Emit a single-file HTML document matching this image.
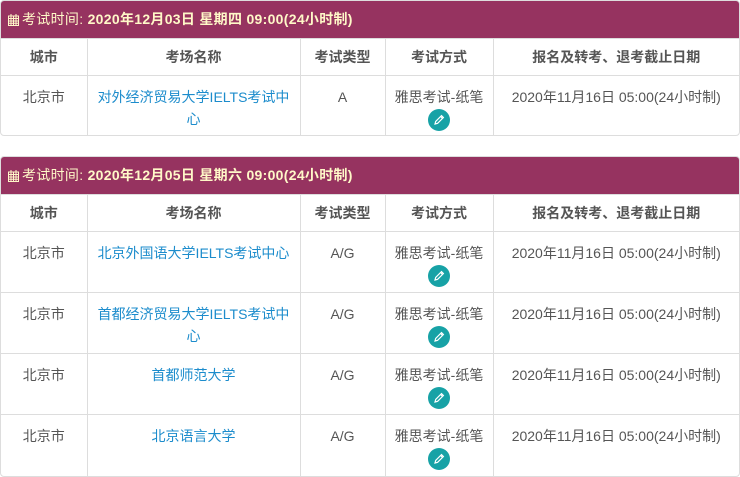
<!DOCTYPE html>
<html><head><meta charset="utf-8"><style>
*{margin:0;padding:0;box-sizing:border-box}
body{width:740px;height:477px;background:#fff;font-family:"Liberation Sans","Noto Sans CJK SC",sans-serif;font-size:14px;color:#555;overflow:hidden}
.blk{position:absolute;left:0;width:740px;border:1px solid #ddd;border-radius:4px;overflow:hidden}
.hd{height:37px;background:#963360;color:#fff8c8;font-size:14px;line-height:37px;padding-left:7px;font-weight:bold;letter-spacing:0.3px;white-space:nowrap}
.hd .l{font-weight:normal}
table{border-collapse:collapse;width:100%;table-layout:fixed}
td,th{border-right:1px solid #ddd;border-top:1px solid #ddd;text-align:center;vertical-align:top}
td:last-child,th:last-child{border-right:none}
th{height:37px;line-height:36px;font-weight:bold;color:#555}
td{height:61px;padding-top:10px;line-height:22px}
td.n{padding-left:10px;padding-right:10px}
a{color:#1c8ccc;text-decoration:none}
.pen{display:inline-block;width:22px;height:22px;border-radius:50%;background:#17a2a6;vertical-align:top;margin-top:1px;position:relative}
.pen svg{position:absolute;left:5px;top:5px}
.cal{display:inline-block;vertical-align:-2px;margin-right:3px}
</style></head><body>
<div class="blk" style="top:0;height:136px">
<div class="hd"><svg class="cal" width="11" height="12" viewBox="0 0 11 12"><rect x="0.5" y="2" width="10" height="9.5" fill="none" stroke="#fff8c8"/><path d="M0 4.5h11M0 7h11M0 9.3h11M3 2v10M5.5 2v10M8 2v10M3 0v3M8 0v3" stroke="#fff8c8" stroke-width="1"/></svg><span class="l">考试时间: </span>2020年12月03日 星期四 09:00(24小时制)</div>
<table><colgroup><col style="width:86px"><col style="width:213px"><col style="width:85px"><col style="width:108px"><col></colgroup>
<tr><th>城市</th><th>考场名称</th><th>考试类型</th><th>考试方式</th><th>报名及转考、退考截止日期</th></tr>
<tr><td>北京市</td><td class="n"><a>对外经济贸易大学IELTS考试中心</a></td><td>A</td><td>雅思考试-纸笔<br><span class="pen"><svg width="12" height="12" viewBox="0 0 12 12"><path d="M2 10l0.7-2.6L8.5 1.6l1.9 1.9L4.6 9.3z M7.6 2.5l1.9 1.9" fill="none" stroke="#fff" stroke-width="1.2"/></svg></span></td><td>2020年11月16日 05:00(24小时制)</td></tr>
</table></div>
<div class="blk" style="top:156px;height:321px">
<div class="hd"><svg class="cal" width="11" height="12" viewBox="0 0 11 12"><rect x="0.5" y="2" width="10" height="9.5" fill="none" stroke="#fff8c8"/><path d="M0 4.5h11M0 7h11M0 9.3h11M3 2v10M5.5 2v10M8 2v10M3 0v3M8 0v3" stroke="#fff8c8" stroke-width="1"/></svg><span class="l">考试时间: </span>2020年12月05日 星期六 09:00(24小时制)</div>
<table><colgroup><col style="width:86px"><col style="width:213px"><col style="width:85px"><col style="width:108px"><col></colgroup>
<tr><th>城市</th><th>考场名称</th><th>考试类型</th><th>考试方式</th><th>报名及转考、退考截止日期</th></tr>
<tr><td>北京市</td><td><a>北京外国语大学IELTS考试中心</a></td><td>A/G</td><td>雅思考试-纸笔<br><span class="pen"><svg width="12" height="12" viewBox="0 0 12 12"><path d="M2 10l0.7-2.6L8.5 1.6l1.9 1.9L4.6 9.3z M7.6 2.5l1.9 1.9" fill="none" stroke="#fff" stroke-width="1.2"/></svg></span></td><td>2020年11月16日 05:00(24小时制)</td></tr>
<tr><td>北京市</td><td class="n"><a>首都经济贸易大学IELTS考试中心</a></td><td>A/G</td><td>雅思考试-纸笔<br><span class="pen"><svg width="12" height="12" viewBox="0 0 12 12"><path d="M2 10l0.7-2.6L8.5 1.6l1.9 1.9L4.6 9.3z M7.6 2.5l1.9 1.9" fill="none" stroke="#fff" stroke-width="1.2"/></svg></span></td><td>2020年11月16日 05:00(24小时制)</td></tr>
<tr><td>北京市</td><td><a>首都师范大学</a></td><td>A/G</td><td>雅思考试-纸笔<br><span class="pen"><svg width="12" height="12" viewBox="0 0 12 12"><path d="M2 10l0.7-2.6L8.5 1.6l1.9 1.9L4.6 9.3z M7.6 2.5l1.9 1.9" fill="none" stroke="#fff" stroke-width="1.2"/></svg></span></td><td>2020年11月16日 05:00(24小时制)</td></tr>
<tr><td>北京市</td><td><a>北京语言大学</a></td><td>A/G</td><td>雅思考试-纸笔<br><span class="pen"><svg width="12" height="12" viewBox="0 0 12 12"><path d="M2 10l0.7-2.6L8.5 1.6l1.9 1.9L4.6 9.3z M7.6 2.5l1.9 1.9" fill="none" stroke="#fff" stroke-width="1.2"/></svg></span></td><td>2020年11月16日 05:00(24小时制)</td></tr>
</table></div>
</body></html>
